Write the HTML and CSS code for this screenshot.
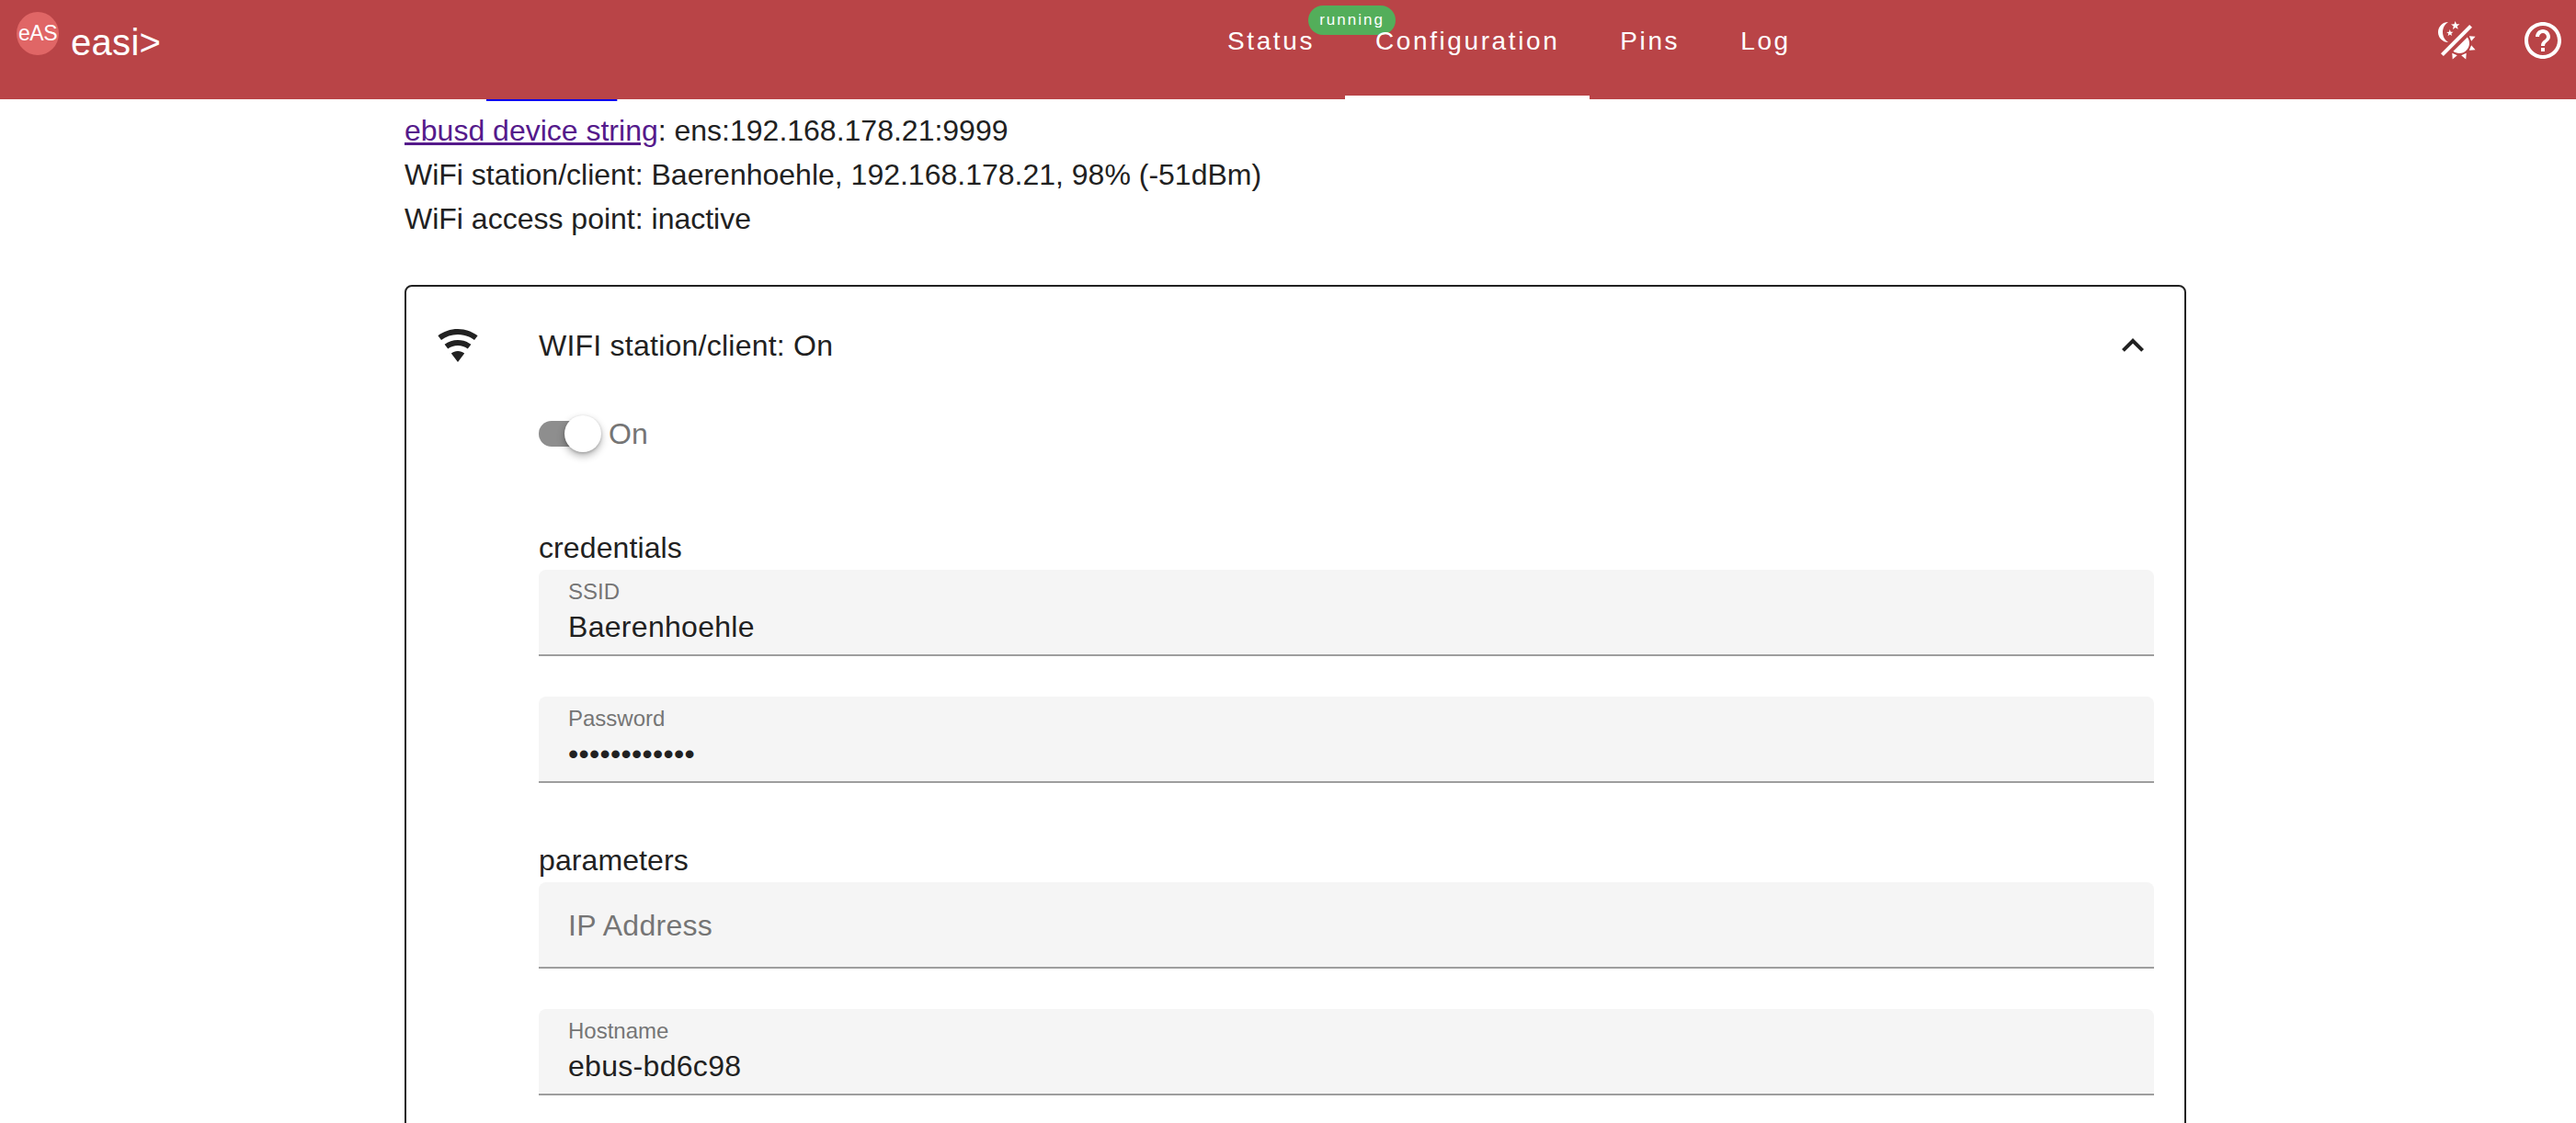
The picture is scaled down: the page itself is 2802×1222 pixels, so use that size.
FILE: index.html
```html
<!DOCTYPE html>
<html lang="en">
<head>
<meta charset="utf-8">
<title>easi&gt;</title>
<link rel="stylesheet" href="styles.css">
</head>
<body>
<header class="topbar">
  <div class="brand">
    <span class="logo">eAS</span>
    <span class="brand-name">easi&gt;</span>
  </div>
  <nav class="tabs">
    <a class="tab">Status<span class="badge">running</span></a>
    <a class="tab tab-active">Configuration</a>
    <a class="tab">Pins</a>
    <a class="tab">Log</a>
  </nav>
  <div class="actions">
    <svg class="icon" viewBox="0 0 24 24"><path d="M7.5,2C5.71,3.15 4.5,5.18 4.5,7.5C4.5,9.82 5.71,11.85 7.53,13C4.46,13 2,10.54 2,7.5A5.5,5.5 0 0,1 7.5,2M19.07,3.5L20.5,4.93L4.93,20.5L3.5,19.07L19.07,3.5M12.89,5.93L11.41,5L9.97,6L10.39,4.3L9,3.24L10.75,3.12L11.33,1.47L12,3.1L13.73,3.13L12.38,4.26L12.89,5.93M9.59,9.54L8.43,8.81L7.31,9.59L7.65,8.27L6.56,7.44L7.92,7.35L8.37,6.06L8.88,7.33L10.24,7.36L9.19,8.23L9.59,9.54M19,13.5A5.5,5.5 0 0,1 13.5,19C12.28,19 11.15,18.6 10.24,17.93L17.93,10.24C18.6,11.15 19,12.28 19,13.5M14.6,20.08L17.37,18.93L17.13,22.28L14.6,20.08M18.93,17.38L20.08,14.61L22.28,17.15L18.93,17.38M20.08,12.42L18.94,9.64L22.28,9.88L20.08,12.42M9.63,18.93L12.4,20.08L9.87,22.27L9.63,18.93Z"/></svg>
    <svg class="icon" viewBox="0 0 24 24"><path d="M11 18h2v-2h-2v2zm1-16C6.48 2 2 6.48 2 12s4.48 10 10 10 10-4.48 10-10S17.52 2 12 2zm0 18c-4.41 0-8-3.59-8-8s3.59-8 8-8 8 3.59 8 8-3.59 8-8 8zm0-14c-2.21 0-4 1.79-4 4h2c0-1.1.9-2 2-2s2 .9 2 2c0 2-3 1.75-3 5h2c0-2.25 3-2.5 3-5 0-2.21-1.79-4-4-4z"/></svg>
  </div>
</header>
<main class="content">
  <div class="info">
    <div>Build: <a class="link-new">20240101</a></div>
    <div><a class="link-visited">ebusd device string</a>: ens:192.168.178.21:9999</div>
    <div>WiFi station/client: Baerenhoehle, 192.168.178.21, 98% (-51dBm)</div>
    <div>WiFi access point: inactive</div>
  </div>
  <section class="card">
    <div class="card-head">
      <svg class="icon wifi" viewBox="0 0 24 24"><path d="M12,21L15.6,16.2C14.6,15.45 13.35,15 12,15C10.65,15 9.4,15.45 8.4,16.2L12,21M12,3C7.95,3 4.21,4.34 1.2,6.6L3,9C5.5,7.12 8.62,6 12,6C15.38,6 18.5,7.12 21,9L22.8,6.6C19.79,4.34 16.05,3 12,3M12,9C9.3,9 6.81,9.89 4.8,11.4L6.6,13.8C8.1,12.67 9.97,12 12,12C14.03,12 15.9,12.67 17.4,13.8L19.2,11.4C17.19,9.89 14.7,9 12,9Z"/></svg>
      <span class="card-title">WIFI station/client: On</span>
      <svg class="icon chevron" viewBox="0 0 24 24"><path d="M12 8l-6 6 1.41 1.41L12 10.83l4.59 4.58L18 14z"/></svg>
    </div>
    <div class="card-body">
      <div class="switch-row">
        <span class="switch"><span class="switch-track"></span><span class="switch-thumb"></span></span>
        <span class="switch-label">On</span>
      </div>
      <div class="group-title group-first">credentials</div>
      <label class="field">
        <span class="field-label">SSID</span>
        <input class="field-input" value="Baerenhoehle" readonly>
      </label>
      <label class="field">
        <span class="field-label">Password</span>
        <input class="field-input" type="password" value="123456789012" readonly>
      </label>
      <div class="group-title">parameters</div>
      <label class="field field-empty">
        <input class="field-input" placeholder="IP Address" readonly>
      </label>
      <label class="field">
        <span class="field-label">Hostname</span>
        <input class="field-input" value="ebus-bd6c98" readonly>
      </label>
    </div>
  </section>
</main>
</body>
</html>
```

FILE: styles.css
```css
* { box-sizing: border-box; }
html, body { margin: 0; height: 100%; overflow: hidden; }
body {
  background: #fff;
  color: #212121;
  font-family: "Liberation Sans", Arial, sans-serif;
  font-size: 32px;
  line-height: 48px;
}

.topbar {
  position: fixed;
  top: 0; left: 0; right: 0;
  height: 108px;
  background: #b94447;
  color: #fff;
  display: flex;
  z-index: 5;
}
.brand { display: flex; width: 1302px; padding: 13px 0 0 18px; }
.logo {
  width: 46px; height: 47px;
  border-radius: 50%;
  background: #e06666;
  font-size: 23px;
  line-height: 47px;
  text-align: center;
  letter-spacing: -0.5px;
  white-space: nowrap;
}
.brand-name { font-size: 40px; line-height: 46px; margin: 10px 0 0 13px; letter-spacing: .3px; }

.tabs { display: flex; }
.tab {
  position: relative;
  height: 108px;
  padding: 25px 33px 0;
  font-size: 28px;
  line-height: 40px;
  letter-spacing: 2.6px;
}
.tab-active { border-bottom: 4px solid #fff; }
.badge {
  position: absolute;
  top: 6px; right: -55px;
  width: 95px; height: 32px;
  border-radius: 16px;
  background: #53ae5a;
  font-size: 17px;
  line-height: 32px;
  text-align: center;
  letter-spacing: 2px;
}

.actions { display: flex; margin-left: auto; padding: 20px 12px 0 0; gap: 46px; }
.icon { display: block; width: 48px; height: 48px; fill: currentColor; flex: none; }

.content { width: 1938px; margin-left: 440px; padding-top: 70px; }
.link-new { color: #0000ee; text-decoration: underline; }
.link-visited { color: #551a8b; text-decoration: underline; }

.card {
  margin-top: 48px;
  border: 2px solid #212121;
  border-radius: 8px;
  padding-bottom: 60px;
}
.card-head { display: flex; align-items: center; height: 128px; padding: 0 32px; }
.wifi { margin-right: 64px; }
.card-title { flex: 1; letter-spacing: .24px; }
.card-body { padding: 12px 33px 0 144px; }

.switch-row { display: flex; align-items: center; height: 40px; }
.switch { position: relative; display: block; width: 68px; height: 40px; }
.switch-track {
  position: absolute; left: 0; top: 6px;
  width: 54px; height: 28px;
  border-radius: 14px;
  background: #8e8e8e;
}
.switch-thumb {
  position: absolute; left: 28px; top: 0;
  width: 40px; height: 40px;
  border-radius: 50%;
  background: #fff;
  box-shadow: 0 4px 8px rgba(0,0,0,.3), 0 1px 3px rgba(0,0,0,.2);
}
.switch-label { margin-left: 8px; color: #757575; }

.group-title { margin-top: 60px; letter-spacing: .1px; }
.group-first { margin-top: 80px; }

.field {
  display: block;
  height: 94px;
  padding: 10px 32px 0;
  background: #f5f5f5;
  border-bottom: 2px solid #9e9e9e;
  border-radius: 8px 8px 0 0;
}
.field + .field { margin-top: 44px; }
.field-label { display: block; font-size: 24px; line-height: 28px; color: #757575; }
.field-input {
  display: block;
  width: 100%; height: 44px;
  margin-top: 2px; padding: 0;
  border: 0; outline: 0;
  background: transparent;
  color: #212121;
  font: inherit;
  line-height: 44px;
  letter-spacing: .3px;
}
.field-input::placeholder { color: #757575; opacity: 1; }
.field-empty { display: flex; align-items: center; padding-top: 2px; }
.field-empty .field-input { margin: 0; }
```
